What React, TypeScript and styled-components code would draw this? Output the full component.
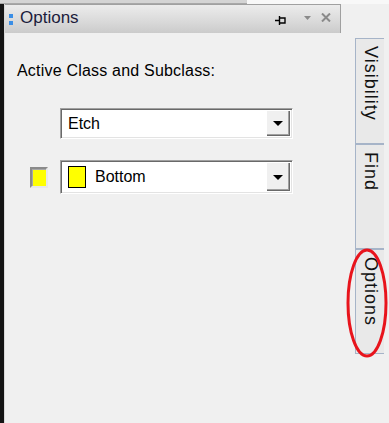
import styled, { createGlobalStyle } from 'styled-components';

const GlobalStyle = createGlobalStyle`
	html, body {
		margin: 0;
		padding: 0;
		background: #f0f0f0;
	}
	* {
		box-sizing: border-box;
	}
`;

const Page = styled.div`
	width: 389px;
	height: 423px;
	overflow: hidden;
	background: #f0f0f0;
	display: flex;
	flex-direction: column;
	font-family: 'Liberation Sans', Arial, sans-serif;
	color: #000;
`;

const TopStrip = styled.div`
	height: 4px;
	display: flex;
	background: #f8f8f8;

	span {
		width: 247px;
		background: #d4d4d4;
		border-bottom: 1px solid #a8a8a8;
	}
`;

const Workspace = styled.div`
	flex: 1;
	display: flex;
	border-left: 4px solid #141414;
	position: relative;
`;

const Panel = styled.div`
	width: 337px;
	display: flex;
	flex-direction: column;
	border-left: 1px solid #d8d8d8;
`;

const TitleBar = styled.div`
	height: 29px;
	display: flex;
	align-items: center;
	padding-left: 4px;
	border-top: 1px solid #a0a0a0;
	border-right: 1px solid #a0a0a0;
	background: linear-gradient(#ececec, #d9d9d9 60%, #cbcbcb);
`;

const Grip = styled.div`
	display: flex;
	flex-direction: column;
	gap: 3px;
	margin-right: 7px;

	i {
		display: block;
		width: 4px;
		height: 4px;
		background: #3a8ee6;
	}
`;

const Title = styled.span`
	font-size: 17px;
	color: #1c1c3c;
	flex: 1;
	margin-top: -2px;
`;

const TitleIcons = styled.div`
	display: flex;
	align-items: center;
	padding-right: 9px;
	margin-top: -3px;

	svg:nth-of-type(1) {
		margin-right: 18px;
		margin-top: 5px;
	}

	svg:nth-of-type(2) {
		margin-right: 10px;
	}
`;

const Body = styled.div`
	padding: 29px 0 0 12px;
`;

const Label = styled.div`
	font-size: 16px;
	letter-spacing: 0.2px;
	margin-bottom: 28px;
`;

const Row = styled.div<{ $indent: number }>`
	display: flex;
	align-items: center;
	padding-left: ${(p) => p.$indent}px;
	margin-bottom: 21px;
`;

const Swatch = styled.div`
	width: 18px;
	height: 21px;
	margin-right: 12px;
	border: 2px solid;
	border-color: #8a8a8a #e8e8e8 #e8e8e8 #8a8a8a;
	box-shadow: inset 1px 1px #a8a8a8;
	background: #ffff00;
	padding: 2px;
`;

const Combo = styled.div<{ $h: number }>`
	width: 233px;
	height: ${(p) => p.$h}px;
	display: flex;
	background: #fff;
	border: 1px solid;
	border-color: #a0a0a0 #fff #fff #a0a0a0;
	box-shadow: inset 1px 1px #696969, inset -1px -1px #e3e3e3;
	padding: 1px;
`;

const Field = styled.div`
	flex: 1;
	display: flex;
	align-items: center;
	padding-left: 6px;
	font-size: 16px;
	gap: 9px;
`;

const ColorBox = styled.span`
	width: 18px;
	height: 22px;
	border: 1px solid #000;
	background: #ffff00;
`;

const DropButton = styled.div`
	width: 24px;
	display: flex;
	align-items: center;
	justify-content: center;
	background: #f0f0f0;
	box-shadow: inset 1px 1px #fff, inset -1px -1px #696969, inset -2px -2px #a0a0a0;
	margin-right: 1px;
	margin-bottom: 1px;

	&::after {
		content: '';
		border-left: 5px solid transparent;
		border-right: 5px solid transparent;
		border-top: 5px solid #000;
		margin-top: 1px;
	}
`;

const TabStrip = styled.div`
	margin-left: 14px;
	padding-top: 34px;
	display: flex;
	flex-direction: column;
`;

const Tab = styled.div<{ $h: number }>`
	width: 29px;
	height: ${(p) => p.$h}px;
	background: #e9e9e9;
	border: 1px solid #a6b4c8;
	border-right: none;
	writing-mode: vertical-rl;
	font-size: 18px;
	letter-spacing: 1px;
	line-height: 27px;
	padding-top: 7px;
	color: #111;
`;

const Annotation = styled.svg`
	position: absolute;
	left: 341px;
	top: 242px;
	pointer-events: none;
`;

function PinIcon() {
	return (
		<svg width='11' height='10' viewBox='0 0 11 10'>
			<path d='M0 5.5h4M4.5 1v9M4.5 3h5.5v5h-5.5' stroke='#000' strokeWidth='1.4' fill='none' />
		</svg>
	);
}

function MenuIcon() {
	return (
		<svg width='7' height='4' viewBox='0 0 7 4'>
			<path d='M0 0h7L3.5 4z' fill='#8a8a8a' />
		</svg>
	);
}

function CloseIcon() {
	return (
		<svg width='10' height='9' viewBox='0 0 10 9'>
			<path d='M1 0.5l8 8M9 0.5l-8 8' stroke='#8a8a8a' strokeWidth='2' />
		</svg>
	);
}

export default function App() {
	return (
		<Page>
			<GlobalStyle />
			<TopStrip>
				<span />
			</TopStrip>
			<Workspace>
				<Panel>
					<TitleBar>
						<Grip>
							<i />
							<i />
						</Grip>
						<Title>Options</Title>
						<TitleIcons>
							<PinIcon />
							<MenuIcon />
							<CloseIcon />
						</TitleIcons>
					</TitleBar>
					<Body>
						<Label>Active Class and Subclass:</Label>
						<Row $indent={43}>
							<Combo $h={31}>
								<Field>Etch</Field>
								<DropButton />
							</Combo>
						</Row>
						<Row $indent={13}>
							<Swatch />
							<Combo $h={34}>
								<Field>
									<ColorBox />
									Bottom
								</Field>
								<DropButton />
							</Combo>
						</Row>
					</Body>
				</Panel>
				<TabStrip>
					<Tab $h={106}>Visibility</Tab>
					<Tab $h={105}>Find</Tab>
					<Tab $h={105}>Options</Tab>
				</TabStrip>
				<Annotation width='44' height='114' viewBox='0 0 44 114'>
					<ellipse cx='22' cy='57' rx='19' ry='53' fill='none' stroke='#e8141c' strokeWidth='3' />
				</Annotation>
			</Workspace>
		</Page>
	);
}
